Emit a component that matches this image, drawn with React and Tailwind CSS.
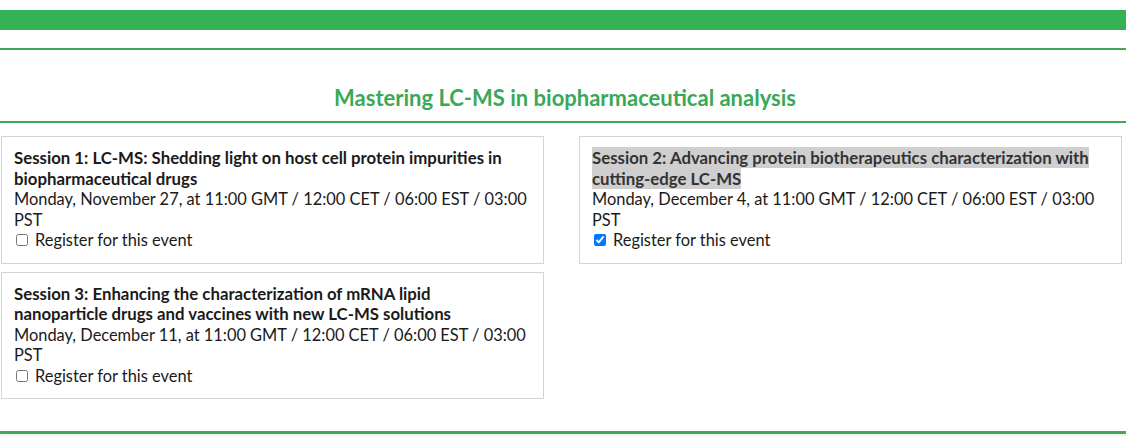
import React from "react";

const sessions = [
  {
    title: "Session 1: LC-MS: Shedding light on host cell protein impurities in biopharmaceutical drugs",
    date: "Monday, November 27, at 11:00 GMT / 12:00 CET / 06:00 EST / 03:00 PST",
    checked: false,
    selected: false,
  },
  {
    title: "Session 2: Advancing protein biotherapeutics characterization with cutting-edge LC-MS",
    date: "Monday, December 4, at 11:00 GMT / 12:00 CET / 06:00 EST / 03:00 PST",
    checked: true,
    selected: true,
  },
  {
    title: "Session 3: Enhancing the characterization of mRNA lipid nanoparticle drugs and vaccines with new LC-MS solutions",
    date: "Monday, December 11, at 11:00 GMT / 12:00 CET / 06:00 EST / 03:00 PST",
    checked: false,
    selected: false,
  },
];

function Card({ s }) {
  return (
    <div className="border border-[#d4d4d4] bg-white pt-[11px] pb-[12px] pl-[12px] pr-[12px] text-[16.4px] leading-[20.5px] text-[#1a1a1a]">
      <div className="pr-[10px] text-[16.8px] font-bold">
        {s.selected ? <span className="bg-[#cfcfcf] text-[#333]">{s.title}</span> : s.title}
      </div>
      <div>{s.date}</div>
      <label className="flex items-center gap-[7px] pl-[2px]">
        <input type="checkbox" defaultChecked={s.checked} className="m-0 h-[12px] w-[12px] accent-[#0075ff]" />
        <span>Register for this event</span>
      </label>
    </div>
  );
}

export default function App() {
  return (
    <div className="w-[1126px] h-[445px] overflow-hidden bg-white pt-[10px]" style={{ fontFamily: "Lato, 'Noto Sans', sans-serif" }}>
      <div className="h-[20px] bg-[#35b155]" />
      <div className="mt-[18px] h-[2px] bg-[#40a85a]" />
      <div className="flex h-[71px] items-center justify-center pt-[24px]">
        <h2 className="pl-[4px] text-[22px] font-bold text-[#3aa859]">Mastering LC-MS in biopharmaceutical analysis</h2>
      </div>
      <div className="h-[2px] bg-[#40a85a]" />
      <div className="grid grid-cols-2 gap-x-[35px] gap-y-[8px] pl-[1px] pr-[4px] pt-[13px]">
        <Card s={sessions[0]} />
        <Card s={sessions[1]} />
        <Card s={sessions[2]} />
      </div>
      <div className="mt-[32px] h-[3px] bg-[#40a85a] shadow-[0_2px_3px_rgba(0,0,0,0.08)]" />
    </div>
  );
}
